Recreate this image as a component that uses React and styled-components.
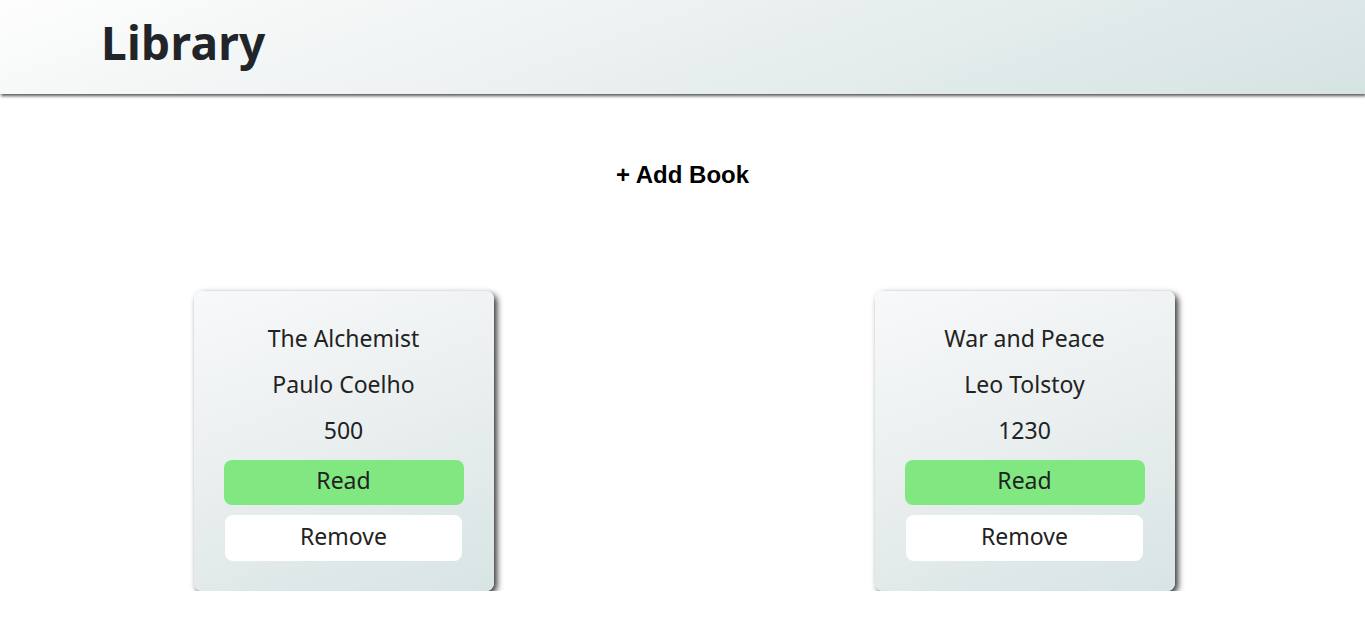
import React from "react"
import styled, { createGlobalStyle } from "styled-components"

const books = [
  { title: "The Alchemist", author: "Paulo Coelho", pages: 500, read: true },
  { title: "War and Peace", author: "Leo Tolstoy", pages: 1230, read: true },
]

const App = () => (
  <>
    <GlobalStyle />
    <Header>
      <Title>Library</Title>
    </Header>
    <Main>
      <AddButton>+ Add Book</AddButton>
      <Shelf>
        {books.map(book => (
          <Card key={book.title}>
            <Line>{book.title}</Line>
            <Line>{book.author}</Line>
            <Line>{book.pages}</Line>
            <ReadButton read={book.read}>{book.read ? "Read" : "Not read"}</ReadButton>
            <RemoveButton>Remove</RemoveButton>
          </Card>
        ))}
      </Shelf>
    </Main>
  </>
)

export default App

const GlobalStyle = createGlobalStyle`
  body {
    margin: 0;
    font-family: "Noto Sans", sans-serif;
    color: #222;
    background: #fff;
  }
`

const Header = styled.header`
  height: 94px;
  box-sizing: border-box;
  display: flex;
  align-items: center;
  padding: 0 0 10px 101px;
  background: linear-gradient(160deg, #fdfdfd 0%, #eef2f2 40%, #d6e3e3 100%);
  box-shadow: 1px 2px 3px #555;
`

const Title = styled.h1`
  margin: 0;
  font-size: 46px;
  font-weight: 700;
  color: #212529;
  letter-spacing: 0.3px;
`

const Main = styled.main`
  display: flex;
  flex-direction: column;
  align-items: center;
  padding-top: 63px;
`

const AddButton = styled.button`
  border: none;
  background: none;
  font-family: "Liberation Sans", Arial, sans-serif;
  font-weight: 700;
  font-size: 24px;
  line-height: 28px;
  color: #000;
  padding: 4px 8px;
  cursor: pointer;
`

const Shelf = styled.div`
  width: 100%;
  box-sizing: border-box;
  padding-left: 3px;
  margin-top: 98px;
  display: grid;
  grid-template-columns: 1fr 1fr;
  justify-items: center;
`

const Card = styled.div`
  width: 300px;
  height: 300px;
  box-sizing: border-box;
  padding: 24px 30px 30px;
  border-radius: 8px;
  background: linear-gradient(160deg, #f8f9fa 0%, #e9eeee 50%, #d8e4e4 100%);
  box-shadow: 3px 3px 6px rgba(0, 0, 0, 0.8);
  display: flex;
  flex-direction: column;
  align-items: center;
`

const Line = styled.p`
  margin: 0;
  height: 46px;
  line-height: 46px;
  font-size: 23px;
`

const ReadButton = styled.button`
  margin-top: 7px;
  width: 240px;
  height: 45px;
  padding: 0 0 5px;
  border: none;
  border-radius: 8px;
  background: ${p => (p.read ? "#81e780" : "#f08080")};
  font-family: inherit;
  font-size: 23px;
  color: #222;
`

const RemoveButton = styled.button`
  margin-top: 10px;
  width: 237px;
  height: 46px;
  padding: 0 0 5px;
  border: none;
  border-radius: 8px;
  background: #fff;
  font-family: inherit;
  font-size: 23px;
  color: #222;
`
